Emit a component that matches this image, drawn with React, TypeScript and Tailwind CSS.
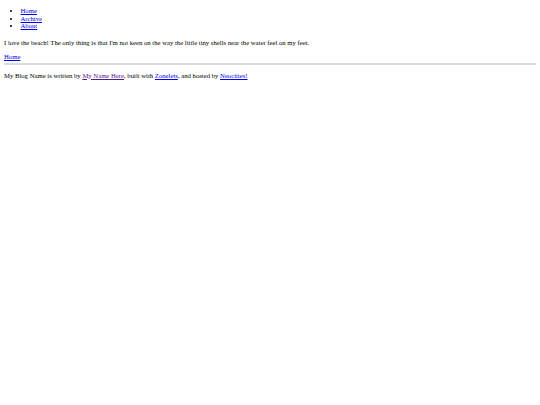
export default function App() {
  return (
    <div className="min-h-[405px] bg-white px-[4px] pt-[7px] text-[6.7px] text-black font-['Liberation_Serif',serif]">
      <ul className="list-disc pl-[16.5px] leading-[7.5px]">
        <li><a href="#" className="text-[#0000ee] underline">Home</a></li>
        <li><a href="#" className="text-[#0000ee] underline">Archive</a></li>
        <li><a href="#" className="text-[#0000ee] underline">About</a></li>
      </ul>
      <p className="mt-[9px] leading-[8px]">
        I love the beach! The only thing is that I'm not keen on the way the little tiny shells near the water feel on my feet.
      </p>
      <div className="mt-[6px] leading-[8px]">
        <a href="#" className="text-[#0000ee] underline">Home</a>
      </div>
      <hr className="mt-[2px] border-t-2 border-[#dcdcdc]" />
      <p className="mt-[7px] leading-[8px]">
        My Blog Name is written by{" "}
        <a href="#" className="text-[#551a8b] underline">My Name Here</a>, built with{" "}
        <a href="#" className="text-[#0000ee] underline">Zonelets</a>, and hosted by{" "}
        <a href="#" className="text-[#0000ee] underline">Neocities!</a>
      </p>
    </div>
  );
}
